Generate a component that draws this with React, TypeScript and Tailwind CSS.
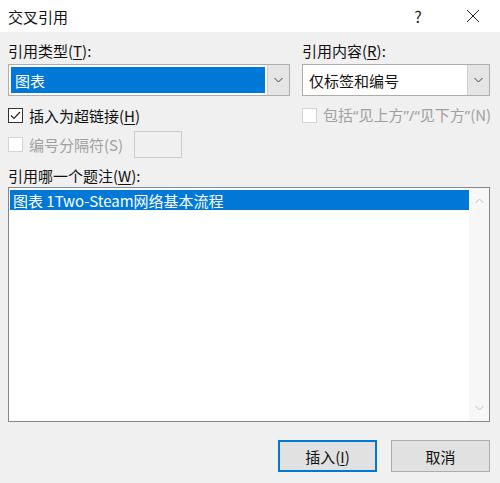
import React from "react";

const FONT = {
  fontFamily: '"Noto Sans CJK SC", "Noto Sans", sans-serif',
};

const Chevron: React.FC<{ dir?: "down" | "up"; color?: string }> = ({
  dir = "down",
  color = "#444",
}) => (
  <svg width="9" height="6" viewBox="0 0 9 6">
    <path
      d={dir === "down" ? "M0.5 1 L4.5 5 L8.5 1" : "M0.5 5 L4.5 1 L8.5 5"}
      fill="none"
      stroke={color}
      strokeWidth="1"
    />
  </svg>
);

const Mn: React.FC<{ children: React.ReactNode }> = ({ children }) => (
  <span className="underline underline-offset-2 decoration-1">{children}</span>
);

// latin quotes, so they don't take a full CJK width
const Q: React.FC<{ children: React.ReactNode }> = ({ children }) => (
  <span className="font-['Noto_Sans',sans-serif]">{children}</span>
);

const CheckBox: React.FC<{ checked?: boolean; disabled?: boolean }> = ({
  checked,
  disabled,
}) => (
  <div
    className={
      "flex h-[15px] w-[15px] shrink-0 items-center justify-center border bg-white " +
      (disabled ? "border-[#d4d4d4]" : "border-[#333333]")
    }
  >
    {checked && (
      <svg width="11" height="9" viewBox="0 0 11 9">
        <path d="M1 4.5 L4 7.5 L10 1" fill="none" stroke="#222" strokeWidth="1.2" />
      </svg>
    )}
  </div>
);

const Combo: React.FC<{ value: string; selected?: boolean }> = ({
  value,
  selected,
}) => (
  <div className="flex h-[32px] w-full border border-[#adadad] bg-white">
    <div className="flex flex-1 p-[2px]">
      <div
        className={
          "flex flex-1 items-center pl-[4px] text-[15px] leading-none " +
          (selected ? "bg-[#0078d7] text-white" : "text-[#111]")
        }
      >
        {value}
      </div>
    </div>
    <div className="flex w-[22px] items-center justify-center border-l border-[#cfcfcf] bg-[#e5e5e5]">
      <Chevron />
    </div>
  </div>
);

export default function App() {
  return (
    <div
      className="flex h-[483px] w-[500px] flex-col bg-[#f0f0f0] text-[#111]"
      style={FONT}
    >
      {/* title bar */}
      <div className="flex h-[32px] items-center bg-white pl-[8px]">
        <span className="text-[15px] leading-none">交叉引用</span>
        <div className="ml-auto flex items-center">
          <span className="w-[20px] text-center text-[16px] leading-none text-[#222]">
            ?
          </span>
          <div className="ml-[38px] mr-[20px] flex h-[14px] w-[14px] items-center justify-center">
            <svg width="14" height="14" viewBox="0 0 14 14">
              <path d="M1 1 L13 13 M13 1 L1 13" stroke="#222" strokeWidth="1" />
            </svg>
          </div>
        </div>
      </div>

      <div className="flex flex-col pl-[8px] pr-[10px] pt-[8px]">
        <div className="flex gap-[12px]">
          {/* left column */}
          <div className="flex w-[282px] flex-col">
            <div className="flex h-[20px] items-center text-[15px] leading-none">
              引用类型(<Mn>T</Mn>):
            </div>
            <div className="mt-[4px]">
              <Combo value="图表" selected />
            </div>
            <div className="mt-[10px] flex h-[18px] items-center gap-[6px] text-[15px] leading-none">
              <CheckBox checked />
              <span>
                插入为超链接(<Mn>H</Mn>)
              </span>
            </div>
            <div className="mt-[7px] flex h-[27px] items-center text-[15px] leading-none text-[#a0a0a0]">
              <CheckBox disabled />
              <span className="ml-[6px]">编号分隔符(S)</span>
              <div className="ml-[11px] h-[27px] w-[48px] border border-[#cccccc] bg-[#f0f0f0]" />
            </div>
          </div>

          {/* right column */}
          <div className="flex w-[188px] flex-col">
            <div className="flex h-[20px] items-center text-[15px] leading-none">
              引用内容(<Mn>R</Mn>):
            </div>
            <div className="mt-[4px]">
              <Combo value="仅标签和编号" />
            </div>
            <div className="mt-[10px] flex h-[18px] items-center gap-[6px] text-[15px] leading-none text-[#a0a0a0]">
              <CheckBox disabled />
              <span className="whitespace-nowrap">
                包括<Q>“</Q>见上方<Q>”/“</Q>见下方<Q>”</Q>(N)
              </span>
            </div>
          </div>
        </div>

        <div className="mt-[7px] flex h-[20px] items-center text-[15px] leading-none">
          引用哪一个题注(<Mn>W</Mn>):
        </div>

        {/* list box */}
        <div className="mt-[2px] flex h-[235px] border border-[#828790] bg-white">
          <div className="flex flex-1 flex-col pl-[1px] pt-[2px]">
            <div className="flex h-[20px] items-center bg-[#0078d7] pl-[3px] text-[15px] leading-none text-white">
              图表 1Two-Steam网络基本流程
            </div>
          </div>
          <div className="flex w-[20px] flex-col items-center justify-between bg-[#f7f7f7] py-[10px]">
            <Chevron dir="up" color="#c2c2c2" />
            <Chevron dir="down" color="#c2c2c2" />
          </div>
        </div>

        {/* buttons */}
        <div className="mt-[18px] flex justify-end gap-[14px]">
          <button className="flex h-[32px] w-[99px] items-center justify-center border-2 border-[#0078d7] bg-[#e1e1e1] text-[15px] leading-none">
            插入(<Mn>I</Mn>)
          </button>
          <button className="flex h-[32px] w-[99px] items-center justify-center border border-[#adadad] bg-[#e1e1e1] text-[15px] leading-none">
            取消
          </button>
        </div>
      </div>
    </div>
  );
}
